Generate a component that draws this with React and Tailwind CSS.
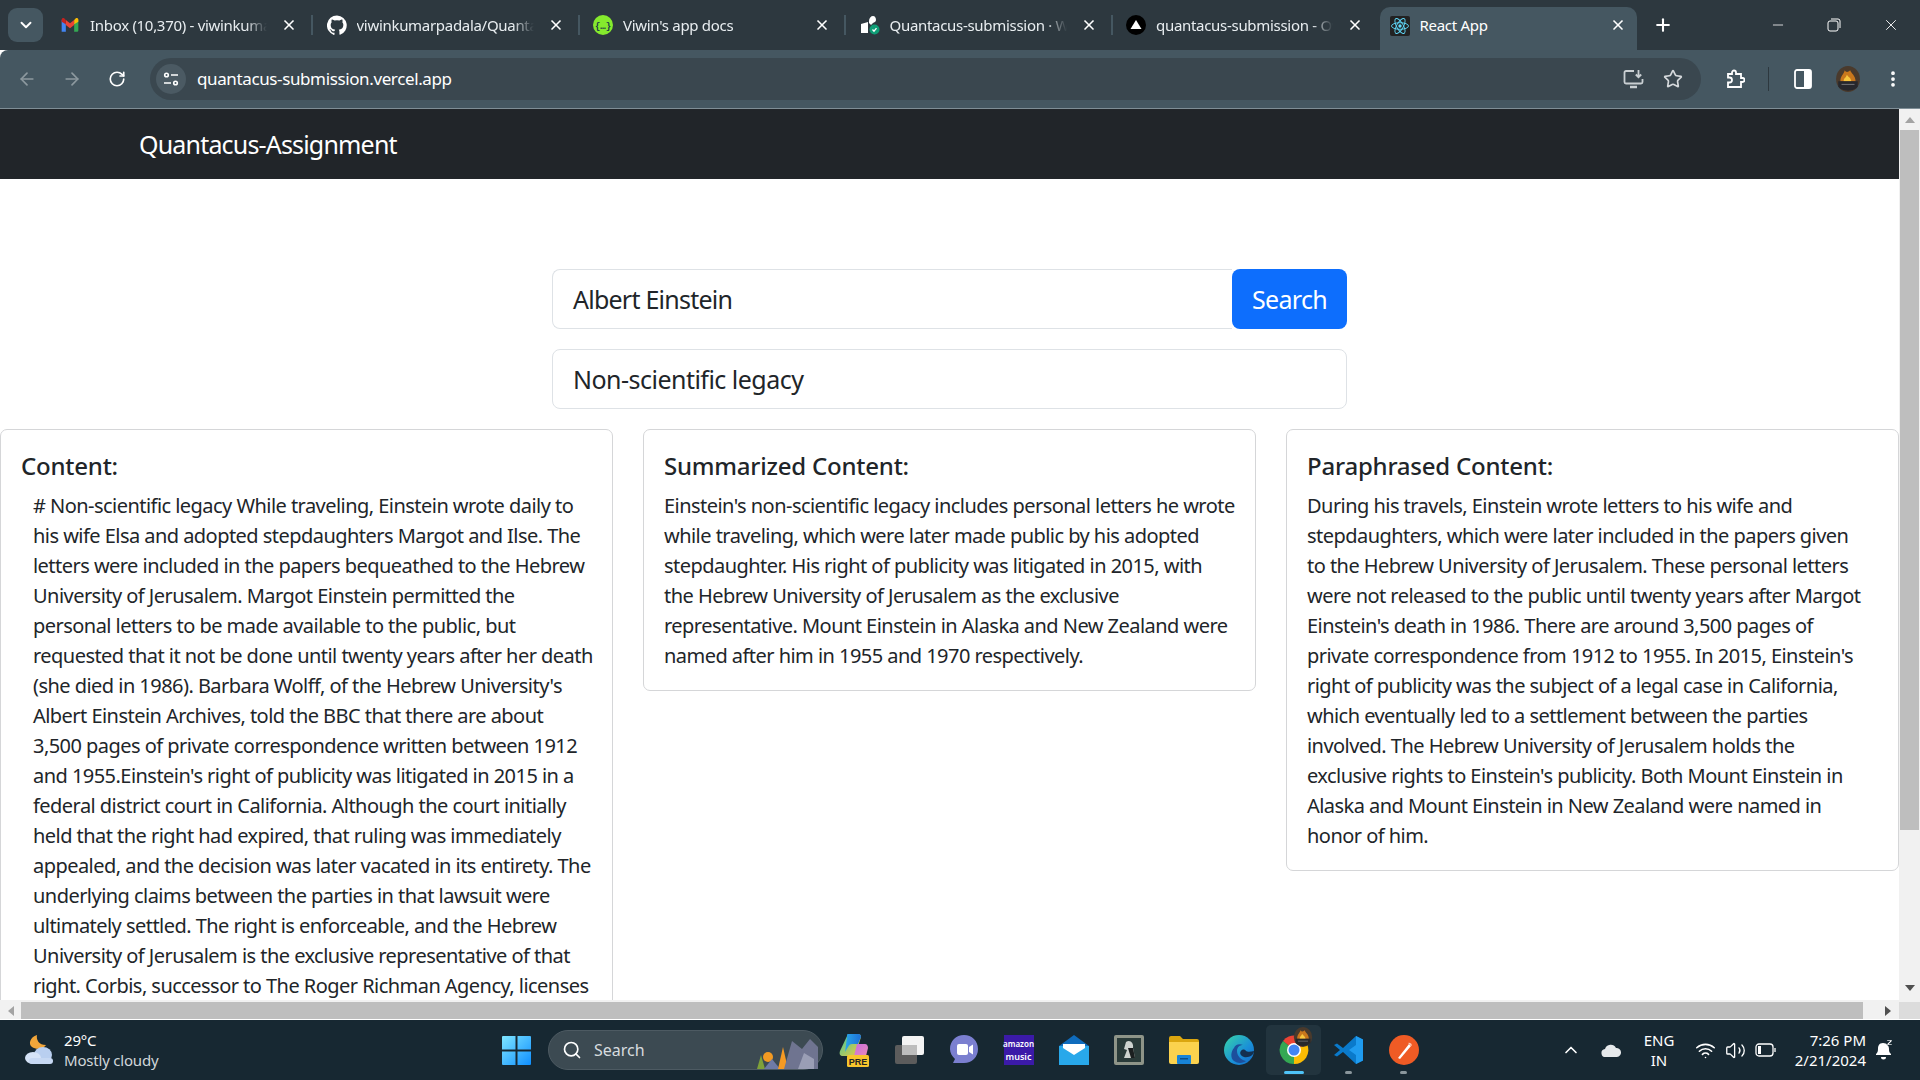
import React from 'react';
import { ArrowLeft, ArrowRight, RotateCw, Star, MoreVertical, ChevronDown, ChevronUp, X, Plus, Minus, Search, Wifi, Volume2 } from 'lucide-react';

const GmailIcon = () => (
    <svg width="20" height="20" viewBox="0 0 24 24">
        <path d="M2 20V6l5 4v10H3.5A1.5 1.5 0 0 1 2 20z" fill="#4285f4" />
        <path d="M22 20V6l-5 4v10h3.5a1.5 1.5 0 0 0 1.5-1.5z" fill="#34a853" />
        <path d="M7 12V6l5 4 5-4v6l-5 4z" fill="#ea4335" />
        <path d="M2 8V5.5C2 4 3.8 3 5 4l2 2v5z" fill="#c5221f" />
        <path d="M22 8V5.5C22 4 20.2 3 19 4l-2 2v5z" fill="#fbbc04" />
    </svg>
);

const GithubIcon = () => (
    <svg width="20" height="20" viewBox="0 0 24 24" fill="#fff">
        <path d="M12 .5a12 12 0 0 0-3.8 23.4c.6.1.8-.3.8-.6v-2.1c-3.3.7-4-1.600-4-1.600-.5-1.400-1.300-1.800-1.300-1.800-1.100-.7.1-.7.1-.7 1.200.1 1.800 1.200 1.800 1.200 1.100 1.800 2.800 1.300 3.500 1 .1-.8.4-1.300.8-1.600-2.700-.3-5.500-1.300-5.500-5.900 0-1.300.5-2.400 1.200-3.200-.1-.3-.5-1.500.1-3.200 0 0 1-.3 3.300 1.200a11.500 11.500 0 0 1 6 0c2.300-1.500 3.300-1.200 3.300-1.200.7 1.700.2 2.900.1 3.200.8.800 1.200 1.900 1.200 3.200 0 4.600-2.800 5.600-5.500 5.900.4.400.8 1.100.8 2.200v3.300c0 .3.2.7.8.6A12 12 0 0 0 12 .5z" />
    </svg>
);

const DocsIcon = () => (
    <svg width="20" height="20" viewBox="0 0 20 20">
        <circle cx="10" cy="10" r="10" fill="#85ea2d" />
        <text x="10" y="13.500" textAnchor="middle" fontSize="9" fontWeight="700" fill="#173647" fontFamily="Liberation Mono, monospace">{'{…}'}</text>
    </svg>
);

const WorkflowIcon = () => (
    <svg width="20" height="20" viewBox="0 0 20 20">
        <path d="M1 9l7-2v11H1z" fill="#fff" />
        <path d="M9 6c0-3 2-5 4-5s3 2 3 4c0 2-2 2-3 3l-2 2-2-2z" fill="#fff" />
        <circle cx="14.500" cy="14.500" r="5" fill="#0f9d76" />
        <path d="M12.500 14.500l1.500 1.700 2.500-3" stroke="#fff" strokeWidth="1.300" fill="none" />
    </svg>
);

const VercelIcon = () => (
    <svg width="20" height="20" viewBox="0 0 20 20">
        <circle cx="10" cy="10" r="10" fill="#000" />
        <path d="M10 5l5.500 9h-11z" fill="#fff" />
    </svg>
);

const ReactIcon = () => (
    <svg width="20" height="20" viewBox="0 0 20 20">
        <rect width="20" height="20" rx="2" fill="#222" />
        <g stroke="#61dafb" strokeWidth="0.900" fill="none">
            <ellipse cx="10" cy="10" rx="8.500" ry="3.300" />
            <ellipse cx="10" cy="10" rx="8.500" ry="3.300" transform="rotate(60 10 10)" />
            <ellipse cx="10" cy="10" rx="8.500" ry="3.300" transform="rotate(120 10 10)" />
        </g>
        <circle cx="10" cy="10" r="1.700" fill="#61dafb" />
    </svg>
);

const Avatar = ({ size }) => (
    <svg width={size} height={size} viewBox="0 0 24 24">
        <ellipse cx="12" cy="12" rx="11" ry="12" fill="#4a3a2c" />
        <path d="M5 14c0-5 3-6 4-10 1 2 3 2 5 0 1 3 5 5 5 10z" fill="#c9771c" />
        <path d="M8 14c0-3 2-3 3-6 1 2 4 3 4 6z" fill="#f8c63d" />
        <path d="M3 14h18v5c-3 5-15 5-18 0z" fill="#26272c" />
        <path d="M6 17h12" stroke="#6e6e70" strokeWidth="1" />
    </svg>
);

const tabs = [
    { icon: <GmailIcon />, title: 'Inbox (10,370) - viwinkumarpadala@gmail.com' },
    { icon: <GithubIcon />, title: 'viwinkumarpadala/Quantacus-submission' },
    { icon: <DocsIcon />, title: "Viwin's app docs" },
    { icon: <WorkflowIcon />, title: 'Quantacus-submission · Workflow' },
    { icon: <VercelIcon />, title: 'quantacus-submission - Overview' },
];

const TabStrip = () => (
    <div className="h-[50px] shrink-0 bg-[#2d383f] flex items-end">
        <div className="w-[47px] h-full pl-2 pt-2">
            <div className="w-[35px] h-[34px] rounded-[9px] bg-[#455761] flex items-center justify-center">
                <ChevronDown className="w-[18px] h-[18px] text-white" strokeWidth={2.500} />
            </div>
        </div>
        {tabs.map((tab, i) => (
            <div key={i} className="w-[266.500px] h-full flex items-center pl-[13px] relative shrink-0">
                <div className="w-5 h-5 shrink-0">{tab.icon}</div>
                <div className="ml-[10px] w-[177px] overflow-hidden whitespace-nowrap text-[15px] tracking-[-0.300px] text-[#e8edf0] [mask-image:linear-gradient(to_right,black_88%,transparent)]">
                    {tab.title}
                </div>
                <X className="absolute left-[234px] top-[17px] w-4 h-4 text-white" strokeWidth={2.500} />
                {i < 4 && <div className="absolute left-[264px] top-[15px] w-[2px] h-5 bg-[#455761]" />}
            </div>
        ))}
        <div className="w-[257px] h-[43px] shrink-0 bg-[#455761] rounded-t-[10px] flex items-center pl-[10px] pb-[6px] relative">
            <ReactIcon />
            <div className="ml-[10px] text-[15px] tracking-[-0.300px] text-white whitespace-nowrap">React App</div>
            <X className="absolute left-[230px] top-[10px] w-4 h-4 text-white" strokeWidth={2.500} />
        </div>
        <div className="h-full flex items-center flex-1 min-w-0">
            <Plus className="ml-[16px] w-5 h-5 text-white" strokeWidth={2.500} />
            <Minus className="ml-[97px] w-4 h-4 text-white" strokeWidth={1.200} />
            <svg className="ml-[41px]" width="14" height="14" viewBox="0 0 14 14" fill="none" stroke="#fff" strokeWidth="1">
                <rect x="1" y="3" width="10" height="10" rx="2" />
                <path d="M4 1h7a2 2 0 0 1 2 2v7" />
            </svg>
            <X className="ml-[41px] w-[18px] h-[18px] text-white" strokeWidth={1.200} />
        </div>
    </div>
);

const Toolbar = () => (
    <div className="h-[59px] shrink-0 bg-[#455761] border-b border-[#7f8e96] rounded-tl-[8px] flex items-center">
        <ArrowLeft className="ml-[17px] w-5 h-5 text-[#8d999f]" strokeWidth={2} />
        <ArrowRight className="ml-[25px] w-5 h-5 text-[#8d999f]" strokeWidth={2} />
        <RotateCw className="ml-[26px] w-[18px] h-[18px] text-white" strokeWidth={2.200} />
        <div className="ml-[24px] w-[1551px] h-[42px] rounded-full bg-[#3a474f] flex items-center pl-[6px]">
            <div className="w-[30px] h-[30px] rounded-full bg-[#4b5a63] flex items-center justify-center">
                <svg width="16" height="14" viewBox="0 0 16 14" fill="none" stroke="#fff" strokeWidth="1.600">
                    <circle cx="3.500" cy="3" r="1.800" />
                    <path d="M8 3h7M1 11h7" />
                    <circle cx="12.500" cy="11" r="1.800" />
                </svg>
            </div>
            <div className="ml-[11px] text-[17px] tracking-[-0.380px] text-white whitespace-nowrap">quantacus-submission.vercel.app</div>
            <div className="ml-auto mr-[18px] flex items-center gap-[19px]">
                <svg width="21" height="20" viewBox="0 0 21 20" fill="none" stroke="#c9cfd2" strokeWidth="1.800">
                    <path d="M11 2H3a1.500 1.500 0 0 0-1.500 1.500V13A1.500 1.500 0 0 0 3 14.500h15a1.500 1.500 0 0 0 1.500-1.500V10" />
                    <path d="M7 18h7" strokeWidth="2.500" />
                    <path d="M15.500 1v7M12.800 5.500l2.700 2.700 2.700-2.700" />
                </svg>
                <Star className="w-[20px] h-[20px] text-[#d5d9dc]" strokeWidth={2} />
            </div>
        </div>
        <svg className="ml-[24px]" width="20" height="20" viewBox="0 0 20 20" fill="none" stroke="#fff" strokeWidth="1.800">
            <path d="M3 5h4V3.500a2 2 0 0 1 4 0V5h5v4h1.500a2 2 0 0 1 0 4H16v5H3v-4.500h1.500a2.500 2.500 0 0 0 0-5H3z" />
        </svg>
        <div className="ml-[23px] w-px h-[24px] bg-[#2d383f]" />
        <svg className="ml-[25px]" width="18" height="20" viewBox="0 0 18 20">
            <rect x="1" y="1" width="16" height="18" rx="2" fill="none" stroke="#fff" strokeWidth="1.800" />
            <rect x="10" y="1" width="7" height="18" fill="#fff" />
        </svg>
        <div className="ml-[23px]"><Avatar size={26} /></div>
        <MoreVertical className="ml-[22px] w-5 h-5 text-white" strokeWidth={2.500} />
    </div>
);

const contentLines = [
    '# Non-scientific legacy While traveling, Einstein wrote daily to',
    'his wife Elsa and adopted stepdaughters Margot and Ilse. The',
    'letters were included in the papers bequeathed to the Hebrew',
    'University of Jerusalem. Margot Einstein permitted the',
    'personal letters to be made available to the public, but',
    'requested that it not be done until twenty years after her death',
    "(she died in 1986). Barbara Wolff, of the Hebrew University's",
    'Albert Einstein Archives, told the BBC that there are about',
    '3,500 pages of private correspondence written between 1912',
    "and 1955.Einstein's right of publicity was litigated in 2015 in a",
    'federal district court in California. Although the court initially',
    'held that the right had expired, that ruling was immediately',
    'appealed, and the decision was later vacated in its entirety. The',
    'underlying claims between the parties in that lawsuit were',
    'ultimately settled. The right is enforceable, and the Hebrew',
    'University of Jerusalem is the exclusive representative of that',
    'right. Corbis, successor to The Roger Richman Agency, licenses',
];

const summaryLines = [
    "Einstein's non-scientific legacy includes personal letters he wrote",
    'while traveling, which were later made public by his adopted',
    'stepdaughter. His right of publicity was litigated in 2015, with',
    'the Hebrew University of Jerusalem as the exclusive',
    'representative. Mount Einstein in Alaska and New Zealand were',
    'named after him in 1955 and 1970 respectively.',
];

const paraphraseLines = [
    'During his travels, Einstein wrote letters to his wife and',
    'stepdaughters, which were later included in the papers given',
    'to the Hebrew University of Jerusalem. These personal letters',
    'were not released to the public until twenty years after Margot',
    "Einstein's death in 1986. There are around 3,500 pages of",
    "private correspondence from 1912 to 1955. In 2015, Einstein's",
    'right of publicity was the subject of a legal case in California,',
    'which eventually led to a settlement between the parties',
    'involved. The Hebrew University of Jerusalem holds the',
    "exclusive rights to Einstein's publicity. Both Mount Einstein in",
    'Alaska and Mount Einstein in New Zealand were named in',
    'honor of him.',
];

const Card = ({ title, lines, indent }) => (
    <div className="border border-[#d5d6d8] rounded-[7px] p-5 pb-[19px] bg-white">
        <h5 className="text-[24px] leading-[29px] font-medium text-[#212529] mb-3 whitespace-nowrap tracking-[-0.220px] relative top-px">{title}</h5>
        <div className={indent ? 'pl-[12px]' : ''}>
            {lines.map((line, i) => (
                <div key={i} className="text-[20px] leading-[30px] text-[#212529] whitespace-nowrap tracking-[-0.540px]">{line}</div>
            ))}
        </div>
    </div>
);

const PageArea = () => (
    <div className="flex-1 min-w-0 min-h-0 overflow-hidden bg-white">
        <div className="h-[70px] bg-[#212529] flex items-center pl-[139px] pt-[2px]">
            <span className="text-[25px] text-white tracking-[-0.820px]">Quantacus-Assignment</span>
        </div>
        <div className="w-[795px] mx-auto mt-[90px]">
            <div className="flex h-[60px]">
                <div className="flex-1 border border-[#dee2e6] border-r-0 rounded-l-[8px] flex items-center pl-[20px] pt-[2px] text-[25px] tracking-[-0.760px] text-[#212529]">Albert Einstein</div>
                <button className="w-[115px] bg-[#0d6efd] rounded-[8px] pt-[2px] text-white text-[25px] tracking-[-0.700px]">Search</button>
            </div>
            <div className="mt-5 h-[60px] border border-[#dee2e6] rounded-[8px] flex items-center pl-[20px] pt-[2px] text-[25px] tracking-[-0.520px] text-[#212529]">Non-scientific legacy</div>
        </div>
        <div className="mt-5 grid grid-cols-3 gap-[30px] items-start">
            <Card title="Content:" lines={contentLines} indent />
            <Card title="Summarized Content:" lines={summaryLines} />
            <Card title="Paraphrased Content:" lines={paraphraseLines} />
        </div>
    </div>
);

const VerticalScrollbar = () => (
    <div className="w-[21px] shrink-0 bg-[#f1f1f1] flex flex-col items-center">
        <div className="h-[21px] flex items-center justify-center">
            <div className="border-x-[5px] border-x-transparent border-b-[6px] border-b-[#a3a3a3]" />
        </div>
        <div className="w-[19px] h-[700px] bg-[#bebebe]" />
        <div className="mt-auto h-[24px] flex items-center justify-center">
            <div className="border-x-[5px] border-x-transparent border-t-[6px] border-t-[#505050]" />
        </div>
    </div>
);

const HorizontalScrollbar = () => (
    <div className="h-[20px] shrink-0 bg-[#f1f1f1] border-t-2 border-t-[#f1f1f1] border-b border-b-white flex items-stretch">
        <div className="w-[21px] flex items-center justify-center">
            <div className="border-y-[5px] border-y-transparent border-r-[6px] border-r-[#a3a3a3]" />
        </div>
        <div className="w-[1842px] bg-[#bebebe]" />
        <div className="w-[36px] flex items-center justify-end pr-[8px]">
            <div className="border-y-[5px] border-y-transparent border-l-[6px] border-l-[#505050]" />
        </div>
        <div className="w-[21px] bg-[#dcdcdc]" />
    </div>
);

const taskbarIcons = [
    <svg width="30" height="34" viewBox="0 0 30 34" key="copilot">
        <defs>
            <linearGradient id="cpa" x1="0" y1="0" x2="1" y2="0">
                <stop offset="0" stopColor="#2aa7e8" />
                <stop offset="1" stopColor="#1d6fd8" />
            </linearGradient>
            <linearGradient id="cpb" x1="0" y1="0" x2="1" y2="1">
                <stop offset="0" stopColor="#c86be0" />
                <stop offset="1" stopColor="#e88ab8" />
            </linearGradient>
            <linearGradient id="cpc" x1="0" y1="0" x2="1" y2="1">
                <stop offset="0" stopColor="#3cc8a0" />
                <stop offset="1" stopColor="#f3c93a" />
            </linearGradient>
        </defs>
        <path d="M9 1h10c2 0 3 1 3 3l-6 19H4c-3 0-4-2-3-5z" fill="url(#cpc)" />
        <path d="M9 1h10c2 0 3 1 3 3l-3 7h-6c-2 0-3 1-4 3l-3 5 2-15c0-2 0-3 1-3z" fill="url(#cpa)" />
        <path d="M18 11h8c2 0 3 2 3 4l-2 8H15z" fill="url(#cpb)" />
        <rect x="8" y="22" width="22" height="12" rx="1.500" fill="#f7c52d" />
        <text x="19" y="31.500" textAnchor="middle" fontSize="9" fontWeight="700" fill="#222" fontFamily="Liberation Sans, sans-serif">PRE</text>
    </svg>,
    <svg width="30" height="30" viewBox="0 0 30 30" key="taskview">
        <rect x="1" y="10" width="22" height="19" rx="2" fill="#5c5c5c" />
        <rect x="8" y="1" width="22" height="19" rx="2" fill="#f4f4f4" />
        <rect x="8" y="10" width="15" height="10" fill="#bdbdbd" />
    </svg>,
    <svg width="30" height="32" viewBox="0 0 30 32" key="meet">
        <path d="M15 1c8 0 14 6 14 14s-6 14-14 14H4l2-4C3 22 1 19 1 15 1 7 7 1 15 1z" fill="#7b7fd0" />
        <rect x="8" y="10" width="11" height="11" rx="2" fill="#fff" />
        <path d="M20 13l4-2.500v10L20 18z" fill="#fff" />
    </svg>,
    <div key="amazon" className="w-[30px] h-[30px] bg-[#3b1aa8] flex flex-col items-center justify-center text-white text-[8px] leading-[10px] font-semibold">
        <span>amazon</span>
        <span className="mt-[3px] text-[9px]">music</span>
    </div>,
    <svg width="30" height="30" viewBox="0 0 30 30" key="mail">
        <path d="M15 0l15 11v19H0V11z" fill="#0f6cbd" />
        <rect x="0" y="11" width="30" height="19" fill="#28a8ea" />
        <path d="M4 9h22v4l-11 7-11-7z" fill="#fff" />
    </svg>,
    <svg width="30" height="30" viewBox="0 0 30 30" key="chess">
        <rect x="0" y="0" width="30" height="30" rx="2" fill="#8e9488" />
        <rect x="3" y="3" width="24" height="24" fill="#2a3b39" />
        <path d="M12 7c4-3 8 1 7 6l2 10H10l3-8-3-1z" fill="#cfd4cf" />
        <path d="M14 13l3 10h4l-2-10z" fill="#1b1f1f" />
    </svg>,
    <svg width="30" height="28" viewBox="0 0 30 28" key="folder">
        <path d="M0 2a2 2 0 0 1 2-2h9l3 3h14a2 2 0 0 1 2 2v4H0z" fill="#dba60f" />
        <path d="M0 6h30v20a2 2 0 0 1-2 2H2a2 2 0 0 1-2-2z" fill="#fbd24e" />
        <rect x="8" y="19" width="14" height="9" rx="1" fill="#1884d8" />
        <rect x="11" y="22" width="8" height="1.500" fill="#0b4f8a" />
    </svg>,
    <svg width="30" height="30" viewBox="0 0 30 30" key="edge">
        <defs>
            <linearGradient id="edgeg" x1="0" y1="0" x2="1" y2="1">
                <stop offset="0" stopColor="#38d6a8" />
                <stop offset="0.600" stopColor="#1a8fd8" />
                <stop offset="1" stopColor="#1467c4" />
            </linearGradient>
        </defs>
        <circle cx="15" cy="15" r="15" fill="url(#edgeg)" />
        <path d="M30 16c0 4-5 7-10 6-3-1-5-4-3-6 1-2 4-2 5 0 1 1 5 1 8 0z" fill="#14304f" />
        <path d="M10 13c1-3 5-5 9-3-3 0-6 2-6 6 0 5 4 9 9 10-2 2-8 3-12 0-4-3-3-10 0-13z" fill="#1c4f9c" />
    </svg>,
    <div key="chrome" className="relative w-[30px] h-[30px]">
        <svg width="30" height="30" viewBox="0 0 30 30">
            <path d="M15 15L4 6A14 14 0 0 1 28 9z" fill="#ea4335" />
            <path d="M15 15L28 9a14 14 0 0 1-13 20z" fill="#fbbc04" />
            <path d="M15 15v14A14 14 0 0 1 4 6z" fill="#34a853" />
            <circle cx="15" cy="15" r="7" fill="#fff" />
            <circle cx="15" cy="15" r="5.500" fill="#4285f4" />
        </svg>
        <div className="absolute left-[14px] -top-[8px]"><Avatar size={20} /></div>
    </div>,
    <svg width="30" height="30" viewBox="0 0 30 30" key="vscode">
        <path d="M22 1l7 3.500v21L22 29 9 17l-6 4.500L0 20l6-5-6-5 3-1.500L9 13z" fill="#0a7acb" />
        <path d="M22 1l7 3.500v21L22 29V20l-7-5 7-5z" fill="#1f9cf0" />
    </svg>,
    <svg width="30" height="30" viewBox="0 0 30 30" key="postman">
        <ellipse cx="15" cy="15" rx="15" ry="15" fill="#ef5b25" />
        <path d="M9 23L20 9l2 2-11 13z" fill="#fff" />
        <path d="M19 8a3 3 0 0 1 4 3z" fill="#f9d9c9" />
    </svg>,
];

const Taskbar = () => (
    <div className="h-[60px] shrink-0 bg-[#172832] flex items-center text-white">
        <div className="w-[502px] flex items-center pl-[24px] shrink-0">
            <svg width="32" height="32" viewBox="0 0 32 32">
                <path d="M13 1c-1 5 2 10 9 10-2 4-10 5-14 2C4 10 6 3 13 1z" fill="#f2a63a" />
                <ellipse cx="19" cy="21" rx="9" ry="8" fill="#b9cff0" />
                <ellipse cx="9" cy="24" rx="8" ry="6" fill="#d5e3f7" />
                <rect x="5" y="24" width="24" height="6" rx="3" fill="#c6d8f3" />
            </svg>
            <div className="ml-[8px] text-[15px] leading-[20px] tracking-[-0.200px]">
                <div>29°C</div>
                <div className="text-[#d0d6da]">Mostly cloudy</div>
            </div>
        </div>
        <svg width="29" height="29" viewBox="0 0 29 29" className="shrink-0">
            <defs>
                <linearGradient id="win" x1="0" y1="0" x2="1" y2="1">
                    <stop offset="0" stopColor="#7fe6ff" />
                    <stop offset="1" stopColor="#0f8fff" />
                </linearGradient>
            </defs>
            <path d="M0 1a1 1 0 0 1 1-1h12.500v13.500H0zM15.500 0H28a1 1 0 0 1 1 1v12.500H15.500zM0 15.500h13.500V29H1a1 1 0 0 1-1-1zM15.500 15.500H29V28a1 1 0 0 1-1 1H15.500z" fill="url(#win)" />
        </svg>
        <div className="ml-[17px] w-[275px] h-[40px] shrink-0 rounded-full bg-[#3c4a52] border border-[#4d5a62] flex items-center pl-[13px] relative">
            <Search className="w-[20px] h-[20px] text-white" strokeWidth={2} />
            <span className="ml-[12px] text-[16px] text-[#d7dcdf]">Search</span>
            <svg className="absolute right-[2px] top-[2px]" width="66" height="36" viewBox="0 0 66 36">
                <path d="M3 36l4-14 4 14z" fill="#7fa13a" />
                <circle cx="14" cy="24" r="5" fill="#f29a22" />
                <path d="M10 36l8-10 8 10z" fill="#6e7aa6" />
                <path d="M24 36l5-22 5 22z" fill="#f59a23" />
                <path d="M30 36l8-28 10 8 8-10 8 8v22z" fill="#6f7490" />
                <path d="M44 36l6-16 10 6v10z" fill="#9a9eb5" />
            </svg>
        </div>
        <div className="ml-[3px] flex items-center shrink-0">
            {taskbarIcons.map((icon, i) => (
                <div key={i} className={`w-[55px] h-[50px] flex items-center justify-center relative ${i === 8 ? 'bg-[#22343e] rounded-[5px]' : ''}`}>
                    {icon}
                    {i === 8 && <div className="absolute bottom-[1px] left-[18px] w-5 h-[3px] rounded-full bg-[#4fc3f7]" />}
                    {(i === 9 || i === 10) && <div className="absolute bottom-[1px] left-[24px] w-[7px] h-[3px] rounded-full bg-[#8a969c]" />}
                </div>
            ))}
        </div>
        <ChevronUp className="ml-[130px] w-[20px] h-[20px] text-white shrink-0" strokeWidth={2} />
        <svg className="ml-[20px] shrink-0" width="21" height="14" viewBox="0 0 21 14">
            <path d="M5 14a4 4 0 0 1-1-8 6 6 0 0 1 11-1 4.500 4.500 0 0 1 1 9z" fill="#e6e9eb" />
        </svg>
        <div className="ml-[18px] w-[38px] text-center text-[15px] leading-[20px] shrink-0">
            <div>ENG</div>
            <div>IN</div>
        </div>
        <Wifi className="ml-[17px] w-[21px] h-[21px] text-white shrink-0" strokeWidth={1.800} />
        <Volume2 className="ml-[9px] w-[21px] h-[21px] text-white shrink-0" strokeWidth={1.500} />
        <svg className="ml-[9px] shrink-0" width="21" height="14" viewBox="0 0 21 14" fill="none" stroke="#fff" strokeWidth="1.300">
            <rect x="1" y="1" width="17" height="12" rx="3" />
            <rect x="3" y="3" width="3" height="8" fill="#fff" stroke="none" />
            <path d="M20 5v4" />
        </svg>
        <div className="ml-[11px] w-[79px] text-right text-[15px] leading-[20px] shrink-0">
            <div>7:26 PM</div>
            <div>2/21/2024</div>
        </div>
        <svg className="ml-[9px] shrink-0" width="18" height="20" viewBox="0 0 18 20" fill="#fff">
            <path d="M8 3C4 3 3 6 3 9c0 3-1 4-2 5v1h15v-1c-1-1-2-2-2-4V9C14 6 12 3 8 3zM6 17h5a2.500 2.500 0 0 1-5 0z" />
            <path d="M12 0h5v1l-3 3h3v1h-5V4l3-3h-3z" stroke="#172832" strokeWidth="0.400" />
        </svg>
    </div>
);

const App = () => {
    return (
        <div className="w-[1920px] h-[1080px] overflow-hidden flex flex-col font-['Noto_Sans',sans-serif]">
            <TabStrip />
            <Toolbar />
            <div className="flex-1 flex min-h-0">
                <PageArea />
                <VerticalScrollbar />
            </div>
            <HorizontalScrollbar />
            <Taskbar />
        </div>
    );
};

export default App;
